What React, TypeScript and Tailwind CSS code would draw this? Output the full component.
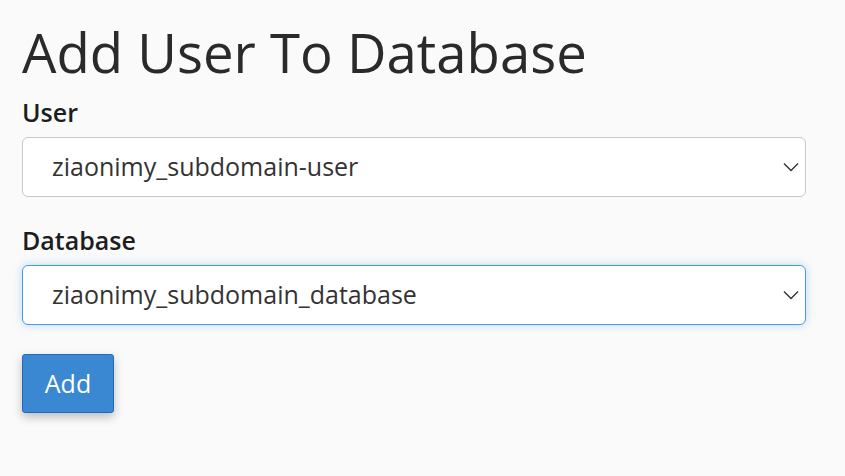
import { useState } from "react"

function Chevron() {
  return (
    <svg
      width="16"
      height="10"
      viewBox="0 0 16 10"
      fill="none"
      className="pointer-events-none absolute right-[7px] top-1/2 -translate-y-1/2"
    >
      <path d="M1 1.5 L8 8.5 L15 1.5" stroke="#333" strokeWidth="1.4" />
    </svg>
  )
}

function SelectField({
  label,
  value,
  options,
  focused,
}: {
  label: string
  value: string
  options: string[]
  focused?: boolean
}) {
  const [v, setV] = useState(value)
  return (
    <div className="flex flex-col">
      <label className="text-[25px] font-semibold leading-[30px] text-[#1d1d1d]">{label}</label>
      <div className="relative mt-[10px] w-[784px]">
        <select
          value={v}
          onChange={(e) => setV(e.target.value)}
          className={
            focused
              ? "h-[60px] w-full appearance-none rounded-[6px] border border-[#4a9be6] bg-white pl-[29px] text-[25px] text-[#333] shadow-[0_0_10px_rgba(74,155,230,0.35)] outline-none"
              : "h-[60px] w-full appearance-none rounded-[6px] border border-[#c8c8c8] bg-white pl-[29px] text-[25px] text-[#333] outline-none"
          }
        >
          {options.map((o) => (
            <option key={o}>{o}</option>
          ))}
        </select>
        <Chevron />
      </div>
    </div>
  )
}

export default function App() {
  return (
    <div
      className="min-h-[476px] bg-[#fafafa] px-[22px] pt-[17px]"
      style={{ fontFamily: '"Open Sans", sans-serif' }}
    >
      <h1 className="text-[54.5px] leading-[70px] text-[#2a2a2a]">Add User To Database</h1>
      <div className="mt-[10px] flex flex-col gap-[28px]">
        <SelectField
          label="User"
          value="ziaonimy_subdomain-user"
          options={["ziaonimy_subdomain-user"]}
        />
        <SelectField
          label="Database"
          value="ziaonimy_subdomain_database"
          options={["ziaonimy_subdomain_database"]}
          focused
        />
      </div>
      <button className="mt-[29px] h-[59px] w-[92px] rounded-[3px] border border-[#1f6cb8] bg-[#3a87d2] text-[25px] text-white shadow-[0_4px_10px_rgba(0,0,0,0.25)]">
        Add
      </button>
    </div>
  )
}
